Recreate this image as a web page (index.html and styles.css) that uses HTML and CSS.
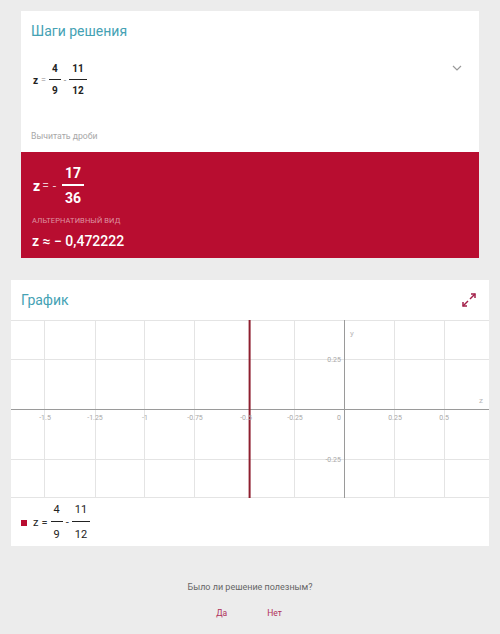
FILE: index.html
```html
<!DOCTYPE html>
<html lang="ru">
<head>
<meta charset="utf-8">
<link rel="stylesheet" href="styles.css">
</head>
<body>
<div class="page">
  <section class="steps">
    <div class="steps-top">
      <h2 class="title">Шаги решения</h2>
      <div class="eq-row">
        <div class="eq small">
          <span>z</span><span class="op">=</span>
          <span class="frac"><span class="num">4</span><span class="den">9</span></span>
          <span class="op">-</span>
          <span class="frac"><span class="num">11</span><span class="den">12</span></span>
        </div>
        <svg class="chev" width="10" height="6" viewBox="0 0 10 6"><path d="M1 1 L5 5 L9 1" fill="none" stroke="#9a9a9a" stroke-width="1.2"/></svg>
      </div>
      <div class="hint">Вычитать дроби</div>
    </div>
    <div class="answer">
      <div class="eq big">
        <span>z</span><span class="op">=</span><span class="op">-</span>
        <span class="frac"><span class="num">17</span><span class="den">36</span></span>
      </div>
      <div class="alt">АЛЬТЕРНАТИВНЫЙ ВИД</div>
      <div class="approx">z ≈ − 0,472222</div>
    </div>
  </section>

  <section class="graph-card">
    <div class="graph-head">
      <h2 class="title">График</h2>
      <svg class="expand" width="16" height="16" viewBox="0 0 16 16">
        <g fill="none" stroke="#a3214a" stroke-width="1.5">
          <path d="M9 7 L14 2"/><path d="M10 2 L14 2 L14 6"/>
          <path d="M7 9 L2 14"/><path d="M2 10 L2 14 L6 14"/>
        </g>
      </svg>
    </div>
    <svg class="plot" width="478" height="178" viewBox="0 0 478 178">
      <g stroke="#e4e4e4" stroke-width="1">
        <line x1="33.5" y1="0" x2="33.5" y2="178"/>
        <line x1="84.5" y1="0" x2="84.5" y2="178"/>
        <line x1="133.5" y1="0" x2="133.5" y2="178"/>
        <line x1="183.5" y1="0" x2="183.5" y2="178"/>
        <line x1="283.5" y1="0" x2="283.5" y2="178"/>
        <line x1="383.5" y1="0" x2="383.5" y2="178"/>
        <line x1="433.5" y1="0" x2="433.5" y2="178"/>
        <line x1="0" y1="39.5" x2="478" y2="39.5"/>
        <line x1="0" y1="139.5" x2="478" y2="139.5"/>
        <line x1="0" y1="0.5" x2="478" y2="0.5"/>
        <line x1="0" y1="177.5" x2="478" y2="177.5"/>
      </g>
      <g stroke="#9a9a9a" stroke-width="1">
        <line x1="0" y1="89.5" x2="478" y2="89.5"/>
        <line x1="333.5" y1="0" x2="333.5" y2="178"/>
      </g>
      <line x1="238.6" y1="0" x2="238.6" y2="178" stroke="#8e1f2f" stroke-width="2"/>
      <g class="lbl" fill="#a8a8a8" font-size="7" text-anchor="middle">
        <text x="34" y="100">-1.5</text>
        <text x="84" y="100">-1.25</text>
        <text x="134" y="100">-1</text>
        <text x="184" y="100">-0.75</text>
        <text x="235" y="100">-0.5</text>
        <text x="284" y="100">-0.25</text>
        <text x="328" y="100">0</text>
        <text x="384" y="100">0.25</text>
        <text x="433" y="100">0.5</text>
      </g>
      <g class="lbl" fill="#a8a8a8" font-size="7" text-anchor="end">
        <text x="330" y="42">0.25</text>
        <text x="330" y="142">-0.25</text>
      </g>
      <text class="lbl" x="339" y="16" fill="#b8b8b8" font-size="8">y</text>
      <text class="lbl" x="468" y="83" fill="#b8b8b8" font-size="8">z</text>
    </svg>
    <div class="legend">
      <span class="swatch"></span>
      <div class="eq legend-eq">
        <span>z</span><span class="op">=</span>
        <span class="frac"><span class="num">4</span><span class="den">9</span></span>
        <span class="op">-</span>
        <span class="frac"><span class="num">11</span><span class="den">12</span></span>
      </div>
    </div>
  </section>

  <section class="feedback">
    <div class="question">Было ли решение полезным?</div>
    <div class="buttons">
      <span class="btn">Да</span>
      <span class="btn">Нет</span>
    </div>
  </section>
</div>
</body>
</html>
```
FILE: styles.css
```css
* { box-sizing: border-box; }
html, body {
  margin: 0;
  padding: 0;
  background: #ececec;
  font-family: Roboto, "Liberation Sans", Arial, sans-serif;
  width: 500px;
  height: 634px;
  overflow: hidden;
}
.page {
  display: flex;
  flex-direction: column;
  padding-top: 11px;
}
.steps {
  margin: 0 21px;
  background: #fff;
  display: flex;
  flex-direction: column;
}
.steps-top {
  height: 141px;
  padding: 0 10px;
  display: flex;
  flex-direction: column;
}
.title {
  margin: 0;
  font-weight: 400;
  font-size: 14px;
  color: #45a2b4;
  line-height: 18px;
}
.steps-top .title { margin-top: 11px; }
.eq-row {
  display: flex;
  align-items: flex-start;
  justify-content: space-between;
  margin-top: 23px;
  padding-left: 2px;
}
.chev { margin-top: 2px; margin-right: 7px; }
.eq {
  display: flex;
  align-items: center;
  color: #222;
}
.op { margin: 0 3px; color: #888; }
.frac {
  display: inline-flex;
  flex-direction: column;
  align-items: center;
}
.frac .num, .frac .den { padding: 0 3px; }
.frac .num { border-bottom: 1.5px solid currentColor; }
.eq.small { font-size: 10px; font-weight: 700; }
.eq.small .num { padding-bottom: 4px; line-height: 12px; }
.eq.small .den { padding-top: 5px; line-height: 12px; }
.eq.small .op { font-weight: 400; font-size: 9px; }
.hint {
  margin-top: 34px;
  font-size: 8.7px;
  color: #a8a8a8;
}
.answer {
  background: #b80d30;
  height: 106px;
  padding: 12px 11px 0;
  color: #fff;
  display: flex;
  flex-direction: column;
}
.eq.big { color: #fff; font-size: 14px; font-weight: 700; padding-left: 1px; }
.eq.big .op { color: rgba(255,255,255,0.8); font-weight: 400; font-size: 12px; margin: 0 2px; }
.eq.big .op:first-of-type { margin-left: 5px; }
.eq.big .frac .num { padding: 1px 3px 3px; line-height: 16px; border-bottom-width: 2px; }
.eq.big .frac .den { line-height: 16px; padding-top: 4px; padding-bottom: 1px; }
.eq.big .frac { margin-left: 4px; }
.alt {
  margin-top: 9px;
  font-size: 7.5px;
  color: rgba(255,255,255,0.55);
  letter-spacing: 0.1px;
}
.approx {
  margin-top: 8px;
  font-size: 14px;
  font-weight: 500;
  padding-left: 0;
}
.graph-card {
  margin: 22px 11px 0;
  background: #fff;
  display: flex;
  flex-direction: column;
}
.graph-head {
  height: 40px;
  display: flex;
  align-items: center;
  justify-content: space-between;
  padding: 0 12px 0 10px;
}
.graph-head .title { margin-top: 0; }
.expand { margin-top: -1px; }
.plot { display: block; }
.lbl { font-family: Roboto, "Liberation Sans", sans-serif; }
.legend {
  height: 48px;
  display: flex;
  align-items: center;
  padding-left: 10px;
}
.swatch {
  width: 6px;
  height: 6px;
  background: #b80d30;
  margin-right: 6px;
  margin-top: 1px;
}
.legend-eq { font-size: 11px; font-weight: 400; color: #222; }
.legend-eq .op { color: #333; margin: 0 3px; }
.legend-eq .num { line-height: 13px; padding-bottom: 5px; border-bottom-width: 1px; }
.legend-eq .den { line-height: 13px; padding-top: 6px; }
.feedback {
  display: flex;
  flex-direction: column;
  align-items: center;
  margin-top: 35px;
}
.question { font-size: 9px; color: #666; line-height: 12px; }
.buttons {
  display: flex;
  gap: 40px;
  margin-top: 15px;
  margin-left: -2px;
}
.btn { font-size: 8.5px; color: #b0305a; line-height: 10px; }
```
